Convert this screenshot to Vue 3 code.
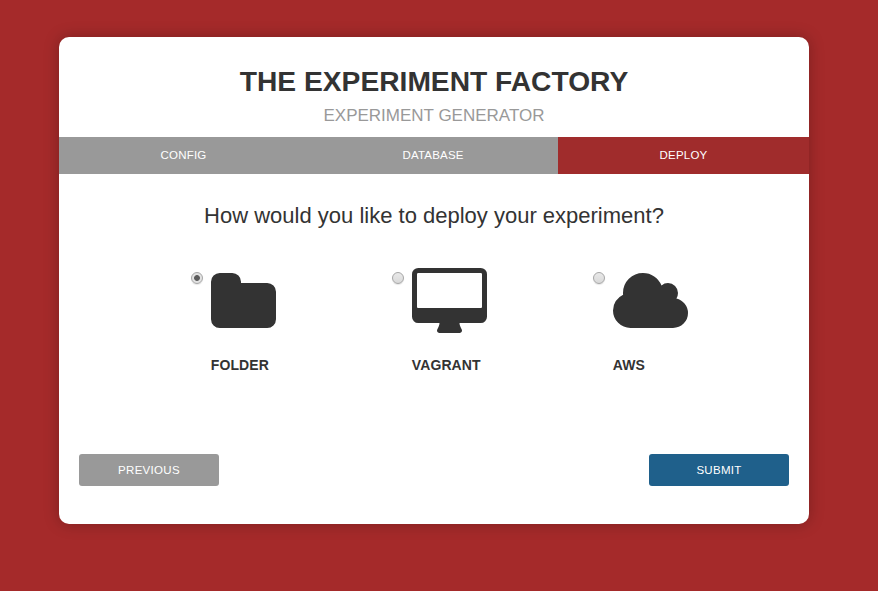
<script setup>
import { ref } from 'vue'

const steps = ['Config', 'Database', 'Deploy']
const current = ref(2)
const selected = ref('folder')

const options = [
  {
    id: 'folder',
    label: 'Folder',
    box: '64 0 1664 1664',
    width: 65,
    path: 'M1728 608v704q0 92-66 158t-158 66h-1216q-92 0-158-66t-66-158v-960q0-92 66-158t158-66h320q92 0 158 66t66 158v32h672q92 0 158 66t66 158z',
  },
  {
    id: 'vagrant',
    label: 'Vagrant',
    box: '64 0 1920 1664',
    width: 75,
    path: 'M1856 992v-832q0-13-9.5-22.5t-22.5-9.5h-1600q-13 0-22.5 9.5t-9.5 22.5v832q0 13 9.5 22.5t22.5 9.5h1600q13 0 22.5-9.5t9.5-22.5zM1984 160v1088q0 66-47 113t-113 47h-544q0 37 16 77.5t32 71 16 43.5q0 26-19 45t-45 19h-512q-26 0-45-19t-19-45q0-14 16-44t32-70 16-78h-544q-66 0-113-47t-47-113v-1088q0-66 47-113t113-47h1600q66 0 113 47t47 113z',
  },
  {
    id: 'aws',
    label: 'AWS',
    box: '64 0 1920 1664',
    width: 75,
    path: 'M1984 1152q0 159-112.5 271.5t-271.5 112.5h-1088q-185 0-316.5-131.5t-131.5-316.5q0-132 71-241.5t187-163.5q-2-28-2-43 0-212 150-362t362-150q158 0 286.5 88t187.5 230q70-62 166-62 106 0 181 75t75 181q0 75-41 138 129 30 213 134.5t84 239.5z',
  },
]
</script>

<template>
  <main class="page">
    <form class="card" @submit.prevent>
      <header class="head">
        <h1>The Experiment Factory</h1>
        <p>Experiment Generator</p>
      </header>
      <nav class="steps">
        <span v-for="(step, i) in steps" :key="step" class="step" :class="{ active: i === current }">{{ step }}</span>
      </nav>
      <h2>How would you like to deploy your experiment?</h2>
      <div class="options">
        <label v-for="o in options" :key="o.id" class="option">
          <input v-model="selected" type="radio" name="deploy" :value="o.id" class="radio" />
          <span class="choice">
            <svg :viewBox="o.box" :width="o.width" height="65"><path fill-rule="evenodd" :d="o.path" /></svg>
            <strong>{{ o.label }}</strong>
          </span>
        </label>
      </div>
      <footer class="actions">
        <button type="button" class="btn">Previous</button>
        <button type="submit" class="btn primary">Submit</button>
      </footer>
    </form>
  </main>
</template>

<style>
body {
  background: #a52a2a;
}
</style>

<style scoped>
.page {
  box-sizing: border-box;
  min-height: 591px;
  padding: 37px 69px 0 59px;
  font-family: 'Liberation Sans', Arial, sans-serif;
  color: #333;
}
.card {
  box-sizing: border-box;
  width: 750px;
  height: 487px;
  background: #fff;
  border-radius: 10px;
  box-shadow: 0 0 15px rgba(0, 0, 0, 0.25);
}
.head {
  height: 100px;
  box-sizing: border-box;
  padding-top: 28px;
  text-align: center;
  text-transform: uppercase;
}
h1 {
  margin: 0;
  font-size: 28.2px;
  line-height: 33px;
}
.head p {
  margin: 8px 0 0;
  font-size: 17px;
  line-height: 20px;
  color: #999;
}
.steps {
  display: grid;
  grid-template-columns: 249px 250px 251px;
  height: 37px;
}
.step {
  background: #999;
  color: #fff;
  font-size: 11.5px;
  letter-spacing: 0.2px;
  line-height: 36px;
  text-align: center;
  text-transform: uppercase;
}
.step.active {
  background: #a02c2c;
}
h2 {
  margin: 29px 0 0;
  font-size: 22px;
  font-weight: normal;
  line-height: 26px;
  text-align: center;
}
.options {
  display: grid;
  grid-template-columns: repeat(3, 201px);
  height: 186px;
  padding: 39px 0 0 132px;
  box-sizing: border-box;
}
.option {
  display: flex;
  align-items: flex-start;
  gap: 7px;
}
.radio {
  appearance: none;
  flex: none;
  box-sizing: border-box;
  width: 12px;
  height: 12px;
  margin: 4px 0 0;
  border: 1px solid #a6a6a6;
  border-radius: 50%;
  background: linear-gradient(#e9e9e9, #d9d9d9);
  box-shadow: 0 1px 1px rgba(0, 0, 0, 0.1);
}
.radio:checked {
  background: radial-gradient(circle, #5c5c5c 2.5px, #e2e2e2 3.3px);
}
.choice {
  display: flex;
  flex-direction: column;
  gap: 24px;
  margin-left: 0.8px;
}
.choice svg {
  display: block;
  fill: #333;
}
.choice strong {
  font-size: 14px;
  letter-spacing: 0.1px;
  line-height: 16px;
  text-transform: uppercase;
}
.actions {
  display: flex;
  justify-content: space-between;
  padding: 39px 20px 0;
}
.btn {
  width: 140px;
  height: 32px;
  padding: 0;
  border: 0;
  border-radius: 3px;
  background: #999;
  color: #fff;
  font: 11.5px/32px 'Liberation Sans', Arial, sans-serif;
  letter-spacing: 0.3px;
  text-transform: uppercase;
}
.btn.primary {
  background: #1f608b;
}
</style>
